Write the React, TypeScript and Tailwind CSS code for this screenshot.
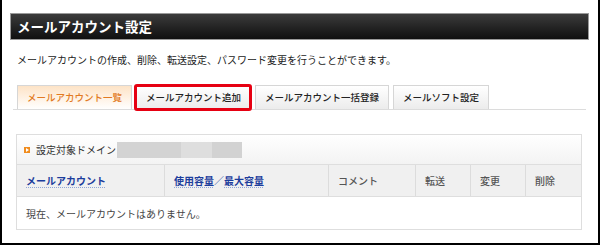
const tabs = [
  { label: "メールアカウント一覧", active: true },
  { label: "メールアカウント追加", marked: true },
  { label: "メールアカウント一括登録" },
  { label: "メールソフト設定" },
];

const columns = [
  { w: "w-[148px]", content: <a className="text-[#1c3d9c] font-bold underline decoration-dotted decoration-[#8fa6d8] underline-offset-2">メールアカウント</a> },
  {
    w: "w-[164px]",
    content: (
      <span className="text-[#1c3d9c] font-bold">
        <a className="underline decoration-dotted decoration-[#8fa6d8] underline-offset-2">使用容量</a>
        <span className="font-normal">／</span>
        <a className="underline decoration-dotted decoration-[#8fa6d8] underline-offset-2">最大容量</a>
      </span>
    ),
  },
  { w: "w-[87px]", content: <span className="text-[#555] font-medium">コメント</span> },
  { w: "w-[55px]", content: <span className="text-[#555] font-medium">転送</span> },
  { w: "w-[55px]", content: <span className="text-[#555] font-medium">変更</span> },
  { w: "flex-1", content: <span className="text-[#555] font-medium">削除</span> },
];

export default function App() {
  return (
    <div
      className="w-[600px] h-[245px] bg-white border-x-2 border-b-2 border-black pl-2 pr-[9px] pt-[13px]"
      style={{ fontFamily: '"Noto Sans CJK JP", "Noto Sans", sans-serif' }}
    >
      {/* title bar */}
      <div className="h-[27px] border border-[#9a9a9a] bg-gradient-to-b from-[#3c3c3c] to-[#101010] flex items-center pl-[6px] text-white font-bold text-[13.5px]">
        メールアカウント設定
      </div>

      <p className="mt-[13px] pl-[7px] text-[10px] leading-[14px] text-[#222]">
        メールアカウントの作成、削除、転送設定、パスワード変更を行うことができます。
      </p>

      {/* tabs */}
      <div className="mt-[18px] mx-[3px] flex gap-[4px] pl-[4px] border-b border-[#dcdcdc]">
        {tabs.map((t) => (
          <div
            key={t.label}
            className={
              "relative h-[24px] px-[9px] flex items-center text-[9.5px] font-medium border border-b-0 border-[#d6d6d6] " +
              (t.active
                ? "bg-gradient-to-b from-[#fde3c6] to-white text-[#e27a22]"
                : "bg-gradient-to-b from-white to-[#ececec] text-[#222]")
            }
          >
            {t.label}
            {t.marked && (
              <div className="absolute -left-[3px] -right-[2px] -top-[2px] -bottom-[2px] border-[3px] border-[#e60012] rounded-[3px]" />
            )}
          </div>
        ))}
      </div>

      {/* account table */}
      <div className="mt-[24px] ml-[6px] mr-[7px] border border-[#dedede] text-[10px]">
        <div className="h-[30px] flex items-center pl-[7px] bg-gradient-to-b from-white to-[#f3f3f3] border-b border-[#dedede] text-[#333]">
          <span className="w-[6px] h-[6px] bg-[#f08c1e] mr-[6px] flex items-center justify-center">
            <span className="w-0 h-0 border-y-[2px] border-y-transparent border-l-[3px] border-l-white" />
          </span>
          設定対象ドメイン
          <div className="flex h-[16px] ml-[1px]">
            <div className="w-[64px] bg-[#d3d3d3]" />
            <div className="w-[31px] bg-[#dedede]" />
            <div className="w-[30px] bg-[#d2d2d2]" />
          </div>
        </div>
        <div className="h-[32px] flex bg-[#f0f0f0] border-b border-[#dedede]">
          {columns.map((c, i) => (
            <div
              key={i}
              className={c.w + " flex items-center pl-[9px] " + (i < columns.length - 1 ? "border-r border-[#dcdcdc]" : "")}
            >
              {c.content}
            </div>
          ))}
        </div>
        <div className="h-[32px] flex items-center pl-[9px] text-[#444]">
          現在、メールアカウントはありません。
        </div>
      </div>
    </div>
  );
}
